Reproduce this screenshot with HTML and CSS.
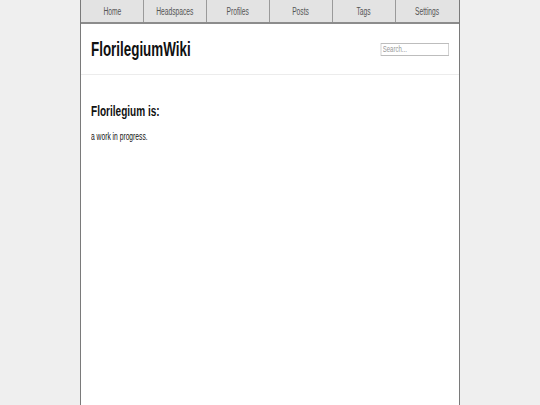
FILE: index.html
```html
<!DOCTYPE html>
<html lang="en">
<head>
<meta charset="utf-8">
<title>FlorilegiumWiki</title>
<link rel="stylesheet" href="styles.css">
</head>
<body>
<div class="page">
  <nav class="nav">
    <a class="nav-item" href="#"><span class="narrow-c">Home</span></a>
    <a class="nav-item" href="#"><span class="narrow-c">Headspaces</span></a>
    <a class="nav-item" href="#"><span class="narrow-c">Profiles</span></a>
    <a class="nav-item" href="#"><span class="narrow-c">Posts</span></a>
    <a class="nav-item" href="#"><span class="narrow-c">Tags</span></a>
    <a class="nav-item" href="#"><span class="narrow-c">Settings</span></a>
  </nav>
  <header class="header">
    <h1 class="title"><span class="narrow">FlorilegiumWiki</span></h1>
    <input class="search" type="text" placeholder="Search...">
  </header>
  <main class="content">
    <h2 class="heading"><span class="narrow">Florilegium is:</span></h2>
    <p class="text"><span class="narrow">a work in progress.</span></p>
  </main>
</div>
</body>
</html>
```
FILE: styles.css
```css
html, body {
  margin: 0;
  padding: 0;
  height: 100%;
}
body {
  background: #efefef;
  font-family: "Liberation Sans", Arial, sans-serif;
  color: #111;
}
.narrow,
.narrow-c {
  display: inline-block;
  white-space: nowrap;
  transform: scaleX(0.67);
}
.narrow {
  transform-origin: left center;
}
.narrow-c {
  transform-origin: center center;
}
.page {
  width: 378px;
  margin: 0 auto;
  min-height: 100%;
  background: #fff;
  border-left: 1px solid #7a7a7a;
  border-right: 1px solid #7a7a7a;
  display: flex;
  flex-direction: column;
}
.nav {
  display: grid;
  grid-template-columns: repeat(6, 1fr);
  height: 22px;
  background: #e3e3e3;
  border-bottom: 2px solid #8c8c8c;
}
.nav-item {
  display: flex;
  align-items: center;
  justify-content: center;
  padding-top: 1px;
  font-size: 10px;
  color: #555;
  text-decoration: none;
  border-right: 1px solid #9a9a9a;
  overflow: hidden;
}
.nav-item:last-child {
  border-right: none;
}
.header {
  display: flex;
  align-items: center;
  justify-content: space-between;
  height: 50px;
  padding: 0 10px 0 10px;
  border-bottom: 1px solid #ececec;
}
.title {
  margin: 0;
  font-size: 20px;
  font-weight: bold;
  color: #111;
}
.search {
  box-sizing: border-box;
  width: 102px;
  height: 13px;
  margin: 0;
  padding: 0 2px;
  border: 1px solid #bdbdbd;
  font-family: inherit;
  font-size: 9px;
  color: #333;
  background: #fff;
  outline: none;
  transform: scaleX(0.67);
  transform-origin: right center;
}
.search::placeholder {
  color: #999;
}
.content {
  padding: 27px 10px 0 10px;
}
.heading {
  margin: 0;
  font-size: 15px;
  font-weight: bold;
}
.text {
  margin: 12px 0 0;
  font-size: 10px;
}
```
